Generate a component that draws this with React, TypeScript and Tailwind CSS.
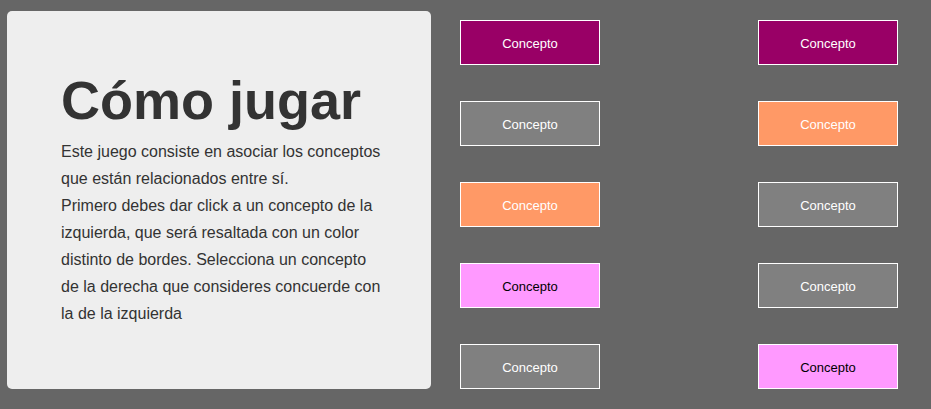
const LEFT = [
  { bg: "bg-[#990066]", fg: "text-white" },
  { bg: "bg-[#808080]", fg: "text-white" },
  { bg: "bg-[#ff9966]", fg: "text-white" },
  { bg: "bg-[#ff99ff]", fg: "text-black" },
  { bg: "bg-[#808080]", fg: "text-white" },
];

const RIGHT = [
  { bg: "bg-[#990066]", fg: "text-white" },
  { bg: "bg-[#ff9966]", fg: "text-white" },
  { bg: "bg-[#808080]", fg: "text-white" },
  { bg: "bg-[#808080]", fg: "text-white" },
  { bg: "bg-[#ff99ff]", fg: "text-black" },
];

function Concepto({ bg, fg }: { bg: string; fg: string }) {
  return (
    <button className={`w-[140px] h-[45px] border border-white ${bg} ${fg} text-[13px] pt-[2px] flex items-center justify-center`}>
      Concepto
    </button>
  );
}

export default function App() {
  return (
    <div className="w-full h-[409px] bg-[#666666] flex pl-[7px] pt-[11px] font-['Liberation_Sans',Arial,sans-serif] overflow-hidden">
      {/* Instrucciones */}
      <div className="w-[424px] h-[378px] shrink-0 rounded-[5px] bg-[#eeeeee] pl-[54px] pt-[59px] text-[#333333]">
        <h1 className="text-[54px] font-bold leading-[60px] mb-[8px]">Cómo jugar</h1>
        <p className="w-[321px] text-[16px] leading-[27px]">
          Este juego consiste en asociar los conceptos que están relacionados entre sí.
          <br />
          Primero debes dar click a un concepto de la izquierda, que será resaltada con un color
          distinto de bordes. Selecciona un concepto de la derecha que consideres concuerde con la
          de la izquierda
        </p>
      </div>

      {/* Columnas */}
      <div className="ml-[29px] mt-[9px] flex gap-[158px]">
        <div className="flex flex-col gap-[36px]">
          {LEFT.map((c, i) => (
            <Concepto key={i} {...c} />
          ))}
        </div>
        <div className="flex flex-col gap-[36px]">
          {RIGHT.map((c, i) => (
            <Concepto key={i} {...c} />
          ))}
        </div>
      </div>
    </div>
  );
}
